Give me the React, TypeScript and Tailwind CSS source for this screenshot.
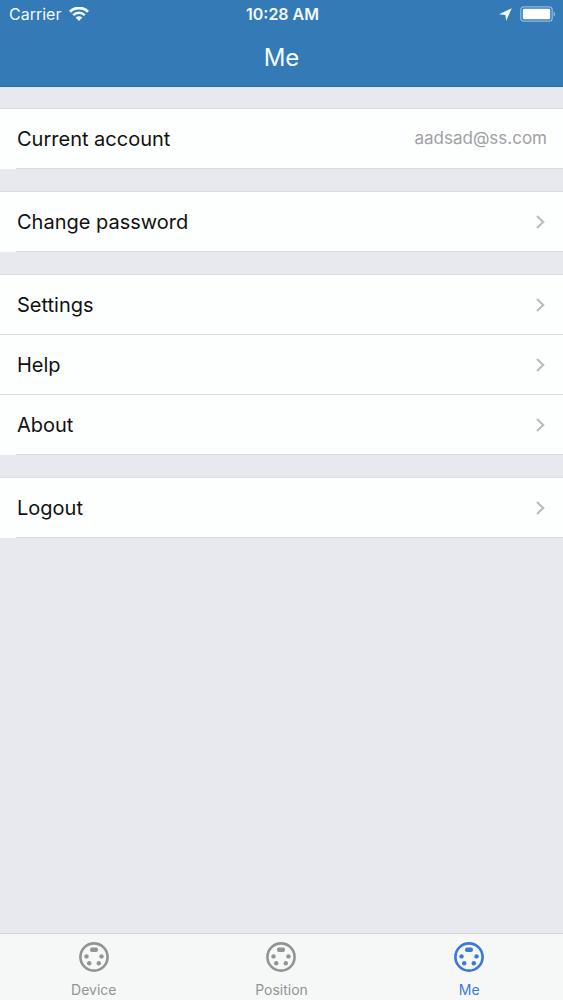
import React from "react";

type Row = { label: string; value?: string };

const groups: Row[][] = [
  [{ label: "Current account", value: "aadsad@ss.com" }],
  [{ label: "Change password" }],
  [{ label: "Settings" }, { label: "Help" }, { label: "About" }],
  [{ label: "Logout" }],
];

const tabs = [
  { label: "Device", active: false },
  { label: "Position", active: false },
  { label: "Me", active: true },
];

function WifiIcon() {
  return (
    <svg width="20" height="14" viewBox="0 0 20 14" fill="none" stroke="currentColor" aria-hidden="true">
      <path d="M1 4.7a12.8 12.8 0 0 1 18 0" strokeWidth="2.8" />
      <path d="M4.2 8.2a8.2 8.2 0 0 1 11.6 0" strokeWidth="2.5" />
      <path d="M10 14 6.6 10.6a4.8 4.8 0 0 1 6.8 0Z" fill="currentColor" stroke="none" />
    </svg>
  );
}

function LocationIcon() {
  return (
    <svg width="13" height="13" viewBox="0 0 13 13" fill="currentColor" aria-hidden="true">
      <path d="M12.8.2 7.2 12.9 6.4 6.9.1 6.2Z" />
    </svg>
  );
}

function BatteryIcon() {
  return (
    <svg width="36" height="16" viewBox="0 0 36 16" fill="none" aria-hidden="true">
      <rect x="0.8" y="0.8" width="31.4" height="14.4" rx="3" stroke="#8fbbe0" strokeWidth="1.2" />
      <rect x="2.8" y="2.8" width="27.4" height="10.4" rx="1.2" fill="white" />
      <path d="M33.6 5.4c1.9.8 1.9 4.4 0 5.2Z" fill="#8fbbe0" />
    </svg>
  );
}

function Chevron() {
  return (
    <svg width="9" height="14" viewBox="0 0 9 14" fill="none" stroke="#bdbdc0" strokeWidth="2.2" aria-hidden="true">
      <path d="M1 1 7.2 7 1 13" />
    </svg>
  );
}

function SocketIcon() {
  return (
    <svg width="30" height="30" viewBox="0 0 30 30" fill="currentColor" aria-hidden="true">
      <circle cx="15" cy="15" r="13.6" fill="none" stroke="currentColor" strokeWidth="2.6" />
      <rect x="11.1" y="5.4" width="7.8" height="4.6" rx="1.7" />
      <circle cx="7.5" cy="14.4" r="2.2" />
      <circle cx="22.5" cy="14.4" r="2.2" />
      <circle cx="10.2" cy="21.3" r="2.2" />
      <circle cx="19.8" cy="21.3" r="2.2" />
    </svg>
  );
}

function ListRow({ label, value }: Row) {
  if (value) {
    return (
      <div className="pl-4">
        <div className="flex h-15 items-center justify-between border-b border-[#dcdce0] pr-4 pl-px text-xl">
          <span>{label}</span>
          <span className="text-[17px] text-[#a0a0a4]">{value}</span>
        </div>
      </div>
    );
  }
  return (
    <button type="button" className="group block w-full border-b border-[#dcdce0] pl-4 text-left last:border-b-0">
      <span className="flex h-[59px] items-center justify-between border-[#dcdce0] pr-[18px] pl-px text-xl group-last:h-15 group-last:border-b">
        <span>{label}</span>
        <Chevron />
      </span>
    </button>
  );
}

export default function App() {
  return (
    <div className="flex min-h-screen flex-col bg-[#e8e9ee] font-['Inter','Liberation_Sans',sans-serif] text-[#111]">
      <header className="border-b border-[#2a6fa5] bg-[#347ab7] text-[#f2fbff]">
        <div className="grid h-7 grid-cols-3 items-center pr-[7px] pl-[9px] text-base">
          <div className="flex items-center gap-2">
            <span>Carrier</span>
            <WifiIcon />
          </div>
          <div className="text-center font-semibold">10:28 AM</div>
          <div className="flex items-center justify-end gap-2">
            <LocationIcon />
            <BatteryIcon />
          </div>
        </div>
        <h1 className="flex h-[58px] items-center justify-center pt-0.5 text-2xl">Me</h1>
      </header>
      <main className="flex flex-1 flex-col gap-[22px] pt-[21px]">
        {groups.map((rows) => (
          <section key={rows[0].label} className="border-t border-[#dcdce0] bg-[#fdfefe]">
            {rows.map((row) => (
              <ListRow key={row.label} {...row} />
            ))}
          </section>
        ))}
      </main>
      <nav className="grid grid-cols-3 border-t border-[#d2d3d9] bg-[#f6f8f8]">
        {tabs.map(({ label, active }) => (
          <button
            key={label}
            type="button"
            aria-current={active ? "page" : undefined}
            className={`flex h-[66px] flex-col items-center gap-2 pt-2 text-sm ${active ? "text-[#3b78dc]" : "text-[#929494]"}`}
          >
            <SocketIcon />
            <span>{label}</span>
          </button>
        ))}
      </nav>
    </div>
  );
}
